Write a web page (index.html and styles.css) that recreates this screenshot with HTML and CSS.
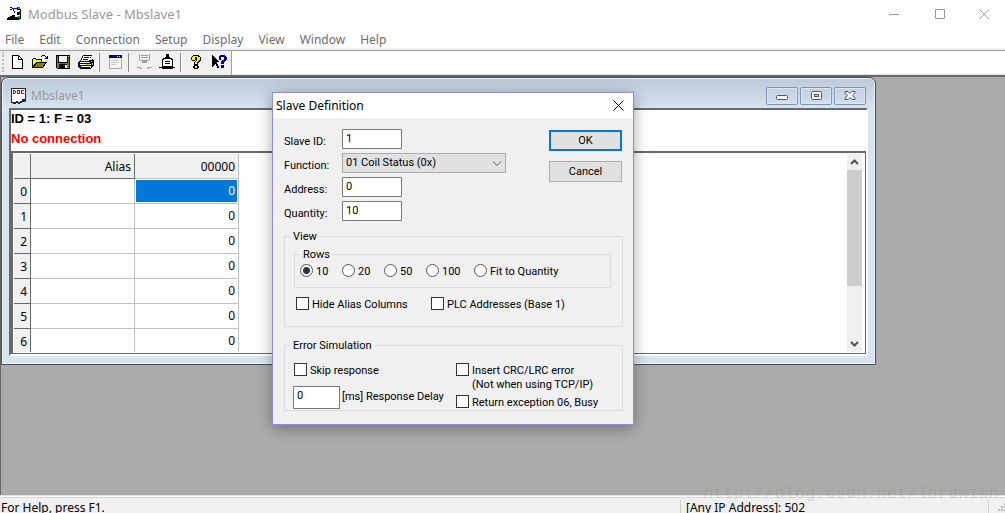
FILE: index.html
```html
<!DOCTYPE html>
<html lang="en">
<head>
<meta charset="utf-8">
<title>Modbus Slave - Mbslave1</title>
<link rel="stylesheet" href="styles.css">
</head>
<body>
<div class="app">
  <header class="titlebar">
    <svg class="app-icon" width="16" height="16" viewBox="0 0 16 16" shape-rendering="crispEdges">
      <path d="M3 1h2v1H3zM3 3h2v1H3zM6 3h1v2H6zM7 5h1v2H7zM10 1h3v3h-3zM10 6h3v3h-3zM10 11h3v3h-3zM1 11h2v-1h2V9h3v2h2v3H0v-2h1z" fill="#000"/>
      <path d="M5 2h6v1H5z" fill="#00f"/>
      <path d="M11 1h2v2h-2zM12 5h2v2h-2zM11 10h2v2h-2z" fill="#0a0"/>
      <path d="M13 3h1v10h-1zM8 12h4v1H8z" fill="#000"/>
      <path d="M12 8h1v1h-1zM12 13h1v1h-1z" fill="#0c0"/>
    </svg>
    <h1 class="app-title">Modbus Slave - Mbslave1</h1>
    <div class="caption">
      <button class="cap-btn" aria-label="Minimize"><svg width="11" height="11" viewBox="0 0 11 11"><path d="M0 5.500h10" stroke="#999" fill="none"/></svg></button>
      <button class="cap-btn" aria-label="Maximize"><svg width="11" height="11" viewBox="0 0 11 11"><path d="M.5.5h9v9h-9z" stroke="#999" fill="none"/></svg></button>
      <button class="cap-btn" aria-label="Close"><svg width="11" height="11" viewBox="0 0 11 11"><path d="M.5.5l9.500 9.500M10 .5L.5 10" stroke="#999" fill="none"/></svg></button>
    </div>
  </header>
  <nav class="menubar">
    <button>File</button><button>Edit</button><button>Connection</button><button>Setup</button><button>Display</button><button>View</button><button>Window</button><button>Help</button>
  </nav>
  <div class="toolbar">
    <div class="tools">
      <span class="grip"></span>
      <button aria-label="New"><svg width="16" height="16" viewBox="0 0 16 16" shape-rendering="crispEdges"><path d="M3 1h7v1h1v1h1v1h1v1h1v10H3z" fill="#000"/><path d="M4 2h5v4h4v8H4z" fill="#fff"/><path d="M10 3h1v1h1v1h-2z" fill="#fff"/></svg></button>
      <button aria-label="Open"><svg width="16" height="16" viewBox="0 0 16 16" shape-rendering="crispEdges"><path d="M1 4h3v1h6v3h5v1h-1v1h-1v2h-1v1h-1v1H0V5h1zM9 2h1V1h3v1h1v1h1V2h1v3h-3V4h1V3h-1V2h-3v1H9z" fill="#000"/><path d="M1 5h3v1h5v2H4v1H3v1H2v1H1z" fill="#ff0"/><path d="M2 5h1v1H2zM1 6h1v1H1zM3 6h1v1H3zM5 6h1v1H5zM7 6h1v1H7zM2 7h1v1H2zM4 7h1v1H4zM6 7h1v1H6zM1 8h1v1H1z" fill="#fff"/><path d="M5 9h8v1h-1v1h-1v2H2v-1h1v-1h1v-1h1z" fill="#808000"/></svg></button>
      <button aria-label="Save"><svg width="16" height="16" viewBox="0 0 16 16" shape-rendering="crispEdges"><path d="M1 1h14v14H2v-1H1z" fill="#000"/><path d="M2 2h1v7h10V4h1v10H2z" fill="#808000"/><path d="M4 2h8v6H4z" fill="#f0f0f0"/><path d="M13 2h1v1h-1z" fill="#fff"/><path d="M4 10h8v4H4z" fill="#000"/><path d="M10 11h2v3h-2z" fill="#fff"/></svg></button>
      <button aria-label="Print"><svg width="16" height="16" viewBox="0 0 16 16" shape-rendering="crispEdges"><path d="M5 1h9v1h-1v2h-1v2h2V5h1v1h1v6h-1v1h-1v1h-1v1H2v-1H1v-1H0V8h1V7h1V6h1V4h1V2h1z" fill="#000"/><path d="M5 2h8v1h-1v3h-1v1H3V6h1V4h1z" fill="#fff"/><path d="M6 3h5v1H6zM5 5h5v1H5z" fill="#000"/><path d="M2 8h10v1H2zM2 10h11v1H2zM3 12h10v1H3z" fill="#fff"/><path d="M13 7h1v1h-1zM14 9h1v2h-1zM12 13h1v1h-1z" fill="#ccc"/><path d="M8 10h3v1H8z" fill="#cc0"/></svg></button>
      <span class="sep"></span>
      <button aria-label="Slave definition"><svg width="16" height="16" viewBox="0 0 16 16" shape-rendering="crispEdges"><path d="M2 1h13v14H2z" fill="#aaa"/><path d="M3 4h11v10H3z" fill="#f4f4f4"/><path d="M2 1h13v3H2z" fill="#000080"/><path d="M10 2h1v1h-1zM12 2h1v1h-1z" fill="#fff"/><path d="M4 6h7v1H4zM4 8h7v1H4zM4 10h5v1H4z" fill="#ccc"/></svg></button>
      <span class="sep"></span>
      <button aria-label="Connect" disabled><svg width="16" height="16" viewBox="0 0 16 16" shape-rendering="crispEdges"><path d="M3 0h1v6H3zM13 0h1v6h-1zM5 1h7v1H5zM5 3h7v1H5zM4 6h9v1H4zM6 7h5v2H6zM1 13h4v1H1zM4 14h2v1H4zM11 14h2v1h-2zM12 13h4v1h-4z" fill="#a0a0a0"/></svg></button>
      <button aria-label="Disconnect"><svg width="16" height="16" viewBox="0 0 16 16" shape-rendering="crispEdges"><path d="M7 0h3v3h1v1h2v1h1v8h2v1h-2v1H3v-1H0v-1h3V5h1V4h2V3h1z" fill="#000"/><path d="M5 5h7v1h1v7H4V6h1z" fill="#fff"/><path d="M6 7h5v1H6zM6 9h5v1H6zM4 12h9v1H4z" fill="#000"/></svg></button>
      <span class="sep"></span>
      <button aria-label="Help"><svg width="16" height="16" viewBox="0 0 16 16" shape-rendering="crispEdges"><path d="M5 1h6v1h1v1h1v4h-1v1h-1v1h-1v2H6V8h1V7h1V6H7v1H4V6H3V3h1V2h1zM6 11h4v1h1v2h-1v1H6v-1H5v-2h1z" fill="#000"/><path d="M5 2h5v1h2v3h-1v1h-1v1H9v2H7V8h1V7h1V3H7v3H4V3h1zM7 12h2v2H7z" fill="#ff0"/></svg></button>
      <button aria-label="Context help"><svg width="16" height="16" viewBox="0 0 16 16" shape-rendering="crispEdges"><path d="M1 1h1v1h1v1h1v1h1v1h1v1h1v1h1v1H6v2h1v2h1v2H6v-2H5v-2H4v1H3v1H2v1H1z" fill="#000"/><path d="M9 1h5v1h1v1h1v3h-1v1h-1v1h-1v2h-3V7h1V6h2V3h-3v3H8V2h1zM10 11h3v3h-3z" fill="#000080"/></svg></button>
    </div>
  </div>

  <main class="workspace">
    <section class="child">
      <div class="child-title">
        <svg width="16" height="16" viewBox="0 0 16 16" shape-rendering="crispEdges"><path d="M0 0h15v13h-2v1h-2v1H9v1H7v-1H5v1H2v-1H0z" fill="#222"/><path d="M1 1h13v10h-3v2H9v1H7v-1H5v1H1z" fill="#fff"/><path d="M2 2h2v1h1v2H4v1H2zM6 2h3v4H6zM10 2h3v1h-2v2h2v1h-3z" fill="#e00000"/><path d="M3 3h1v2H3zM7 3h1v2H7z" fill="#fff"/><path d="M13 13h2v1h-2z" fill="#088"/></svg>
        <h2>Mbslave1</h2>
        <div class="child-btns">
          <button aria-label="Minimize document"><svg width="14" height="12" viewBox="0 0 14 12"><rect x="1.500" y="5.500" width="11" height="4" rx="1" fill="#f4f4f4" stroke="#4d5870"/></svg></button>
          <button aria-label="Restore document"><svg width="14" height="12" viewBox="0 0 14 12"><rect x="2.500" y="1.500" width="10" height="8" rx="1" fill="#f4f4f4" stroke="#4d5870"/><rect x="5.500" y="4.500" width="4" height="2" fill="#c5d3e3" stroke="#4d5870"/></svg></button>
          <button aria-label="Close document"><svg width="14" height="12" viewBox="0 0 14 12"><path d="M2 1.500h3l2 2 2-2h3v1.500L9.500 5.500 12 8v1.500H9l-2-2-2 2H2V8l2.500-2.500L2 3z" fill="#f4f4f4" stroke="#4d5870"/></svg></button>
        </div>
      </div>
      <div class="client">
        <div class="info">
          <p>ID = 1: F = 03</p>
          <p class="alert">No connection</p>
        </div>
        <div class="grid-pane">
          <div class="grid-view">
            <table class="grid">
              <thead><tr><th class="rowhead"></th><th>Alias</th><th>00000</th></tr></thead>
              <tbody>
                <tr><th>0</th><td></td><td class="selected">0</td></tr>
                <tr><th>1</th><td></td><td>0</td></tr>
                <tr><th>2</th><td></td><td>0</td></tr>
                <tr><th>3</th><td></td><td>0</td></tr>
                <tr><th>4</th><td></td><td>0</td></tr>
                <tr><th>5</th><td></td><td>0</td></tr>
                <tr><th>6</th><td></td><td>0</td></tr>
              </tbody>
            </table>
          </div>
          <div class="scroll">
            <svg width="15" height="16" viewBox="0 0 15 16"><path d="M4 10l3.500-3.500L11 10" stroke="#505050" stroke-width="2" fill="none"/></svg>
            <div class="track"><div class="thumb"></div></div>
            <svg width="15" height="16" viewBox="0 0 15 16"><path d="M4 6l3.500 3.500L11 6" stroke="#505050" stroke-width="2" fill="none"/></svg>
          </div>
        </div>
      </div>
    </section>
  </main>

  <footer class="status">
    <span class="status-main">For Help, press F1.</span>
    <span class="status-ip">[Any IP Address]: 502</span>
    <span class="status-end"><svg width="8" height="11" viewBox="0 0 8 11" shape-rendering="crispEdges"><path d="M6 0h2v2H6zM3 3h2v2H3zM6 3h2v2H6zM0 6h2v2H0zM3 6h2v2H3zM6 6h2v2H6z" fill="#bbb"/></svg></span>
  </footer>
  <div class="watermark">http://blog.csdn.net/lordwish</div>

  <form class="dialog" role="dialog" aria-labelledby="dlg-title">
    <div class="dialog-title">
      <h2 id="dlg-title">Slave Definition</h2>
      <button type="button" aria-label="Close dialog"><svg width="11" height="11" viewBox="0 0 11 11"><path d="M.5.5l10 10M10.500.5l-10 10" stroke="#000" fill="none"/></svg></button>
    </div>
    <div class="dialog-body">
      <div class="top">
        <div class="fields">
          <label for="sid">Slave ID:</label><input id="sid" type="text" value="1">
          <label for="fn">Function:</label>
          <div class="combo">
            <select id="fn"><option>01 Coil Status (0x)</option></select>
            <svg width="10" height="6" viewBox="0 0 10 6"><path d="M1 .5l4 4 4-4" stroke="#555" fill="none"/></svg>
          </div>
          <label for="addr">Address:</label><input id="addr" type="text" value="0">
          <label for="qty">Quantity:</label><input id="qty" type="text" value="10">
        </div>
        <div class="actions">
          <button type="button" class="btn default">OK</button>
          <button type="button" class="btn">Cancel</button>
        </div>
      </div>
      <fieldset class="group view">
        <legend>View</legend>
        <fieldset class="group rows">
          <legend>Rows</legend>
          <div class="radios">
            <label class="opt"><input type="radio" name="rows" checked><span>10</span></label>
            <label class="opt"><input type="radio" name="rows"><span>20</span></label>
            <label class="opt"><input type="radio" name="rows"><span>50</span></label>
            <label class="opt wide"><input type="radio" name="rows"><span>100</span></label>
            <label class="opt fit"><input type="radio" name="rows"><span>Fit to Quantity</span></label>
          </div>
        </fieldset>
        <div class="checks">
          <label class="opt"><input type="checkbox"><span>Hide Alias Columns</span></label>
          <label class="opt"><input type="checkbox"><span>PLC Addresses (Base 1)</span></label>
        </div>
      </fieldset>
      <fieldset class="group errors">
        <legend>Error Simulation</legend>
        <div class="error-cols">
          <div class="err-left">
            <label class="opt"><input type="checkbox"><span>Skip response</span></label>
            <div class="delay"><input id="delay" type="text" value="0"><label for="delay">[ms] Response Delay</label></div>
          </div>
          <div class="err-right">
            <label class="opt two"><input type="checkbox"><span>Insert CRC/LRC error<br>(Not when using TCP/IP)</span></label>
            <label class="opt"><input type="checkbox"><span>Return exception 06, Busy</span></label>
          </div>
        </div>
      </fieldset>
    </div>
  </form>
</div>
</body>
</html>
```
FILE: styles.css
```css
* { box-sizing: border-box; }
html, body { margin: 0; height: 100%; }
body { font: 12px/16px "Noto Sans", sans-serif; color: #000; overflow: hidden; }
button { border: 0; padding: 0; background: none; font: inherit; color: inherit; }
h1, h2, p { margin: 0; font: inherit; }
svg { display: block; flex: none; }

.app { position: relative; display: flex; flex-direction: column; height: 100vh; background: #fff; }

.titlebar { display: flex; align-items: center; height: 28px; padding-left: 7px; flex: none; }
.app-title { padding-left: 5px; color: #999; font-size: 13px; }
.caption { display: flex; margin-left: auto; }
.cap-btn { display: grid; place-items: center; width: 46px; height: 28px; }
.cap-btn:last-child { width: 42px; }

.menubar { display: flex; gap: 15px; height: 20px; padding: 4px 5px 0; color: #6d6d6d; flex: none; }

.toolbar { display: flex; height: 29px; border-top: 2px solid #f0f0f0; border-bottom: 2px solid #696969; box-shadow: inset 0 1px #a0a0a0, inset 0 -1px #e3e3e3; flex: none; }
.tools { display: flex; align-items: center; margin-top: 1px; padding: 0 1px 2px 0; background: #f0f0f0; border-right: 1px solid #a0a0a0; }
.tools button { display: grid; place-items: center; width: 23px; height: 22px; }
.grip { width: 4px; height: 20px; margin-right: 1px; border-right: 2px dotted #bbb; }
.sep { width: 6px; height: 19px; padding-left: 2px; }
.sep::before { content: ""; display: block; width: 1px; height: 100%; background: #8c8c8c; }

.workspace { position: relative; flex: 1; background: #ababab; border-left: 1px solid #696969; overflow: hidden; }

.child { position: absolute; left: 0; top: 0; width: 875px; height: 288px; display: flex; flex-direction: column; padding: 0 7px 8px; background: #d7e4f2; border: 1px solid #484c50; border-radius: 7px 7px 0 0; box-shadow: inset 0 0 0 1px #eef5fb; background-image: linear-gradient(#bccad8, #d7e4f2 32px); }
.child-title { display: flex; align-items: center; height: 30px; padding: 6px 2px 0 2px; flex: none; }
.child-title h2 { padding-left: 4px; color: #999; }
.child-btns { display: flex; gap: 2px; margin-left: auto; }
.child-btns button { display: grid; place-items: center; width: 32px; height: 18px; border: 1px solid #8494af; border-radius: 2px; box-shadow: inset 0 0 0 1px #dbe7f3; background: linear-gradient(#c3d1e0, #d0deec); }
.client { display: flex; flex-direction: column; flex: 1; min-height: 0; border: 2px solid; border-color: #696969 #fff #fff #696969; background: #fff; }
.info { height: 41px; font: bold 13px/18px "Liberation Sans", Arial, sans-serif; }
.info p { height: 20px; }
.info .alert { color: #f00; }
.grid-pane { display: flex; flex: 1; min-height: 0; padding: 1px 3px 1px 1px; border: 2px solid #696969; border-right-width: 1px; border-bottom-width: 1px; }
.grid-view { flex: 1; min-height: 0; overflow: hidden; }
.grid { border-collapse: separate; border-spacing: 0; table-layout: fixed; width: 225px; }
.grid th, .grid td { height: 25px; padding: 0 3px 0 0; text-align: right; font-weight: 400; border: 0 solid #c0c0c0; border-width: 0 1px 1px 0; }
.grid th { padding-top: 2px; background: #f0f0f0; border-color: #696969; }
.grid .rowhead { width: 17px; }
.grid thead th:last-child { border-color: #c0c0c0; }
.grid .selected { background: #0078d7; color: #fff; box-shadow: inset 0 0 0 1px #fff; }

.scroll { display: flex; flex-direction: column; width: 15px; background: #f0f0f0; }
.track { flex: 1; }
.thumb { height: 70%; background: #cdcdcd; }

.status { display: flex; height: 18px; padding: 5px 0 0 1px; background: #f0f0f0; box-shadow: inset 0 1px #e0e0e0, inset 0 2px #fff, inset 0 3px #d8d8d8; flex: none; white-space: nowrap; }
.status-main { flex: 1; }
.status-ip { width: 308px; padding-left: 5px; border-left: 1px solid #d0d0d0; }
.status-end { width: 17px; padding: 3px 0 0 9px; border-left: 1px solid #d0d0d0; }
.watermark { position: absolute; right: 6px; bottom: 9px; font: 17px/20px "Liberation Mono", monospace; color: rgba(140, 140, 110, .25); }

.dialog { position: absolute; left: 272px; top: 92px; width: 362px; background: #f0f0f0; border: 1px solid #8f8cd6; box-shadow: 0 3px 14px rgba(0, 0, 0, .35); font: 11px/14px Roboto, "Liberation Sans", sans-serif; }
.dialog input, .dialog select { font: inherit; color: #000; margin: 0; }
.dialog-title { display: flex; align-items: center; justify-content: space-between; height: 25px; padding: 0 9px 0 3px; background: #fff; font: 12px/16px "Noto Sans", sans-serif; }
.dialog-body { padding: 11px 10px 13px 11px; }
.top { display: flex; justify-content: space-between; padding-right: 1px; }
.fields { display: grid; grid-template-columns: 58px 164px; grid-auto-rows: 20px; row-gap: 4px; }
.fields label { padding-top: 6px; }
.dialog input[type="text"] { width: 60px; height: 20px; padding: 0 3px 2px; border: 1px solid #7a7a7a; background: #fff; }
.combo { position: relative; }
.combo select { appearance: none; display: block; width: 100%; height: 20px; padding: 0 3px; background: #e1e1e1; border: 1px solid #adadad; border-radius: 0; }
.combo svg { position: absolute; right: 4px; top: 8px; pointer-events: none; }
.actions { display: flex; flex-direction: column; gap: 10px; padding-top: 1px; }
.btn { width: 73px; height: 21px; background: #e1e1e1; border: 1px solid #adadad; }
.btn.default { border: 2px solid #0078d7; }

.group { min-width: 0; margin: 0; padding: 0; border: 1px solid #dcdcdc; }
.group legend { height: 14px; padding: 1px 3px 0; }
.view { height: 98px; margin-top: 8px; padding: 0 11px 0 9px; }
.view > legend { margin-left: -4px; }
.rows { height: 41px; margin-top: 4px; }
.rows legend { margin-left: 5px; }
.radios { display: flex; padding: 3px 0 0 5px; }
.radios .opt { width: 42px; }
.radios .wide { width: 48px; }
.radios .fit { width: auto; }
.opt { display: flex; align-items: flex-start; gap: 3px; white-space: nowrap; }
.opt span { padding-top: 1px; }
.opt input { appearance: none; width: 13px; height: 13px; border: 1px solid #333; background: #fff; flex: none; }
.opt input[type="radio"] { border-color: #555; border-radius: 50%; }
.opt input[type="radio"]:checked { background: radial-gradient(circle, #333 3px, #fff 4px); }
.checks { display: grid; grid-template-columns: 135px 1fr; padding: 9px 0 0 2px; }
.errors { height: 73px; margin-top: 11px; padding: 0 8px; }
.errors > legend { margin-left: -3px; }
.error-cols { display: grid; grid-template-columns: 163px 1fr; padding-top: 11px; }
.err-left .opt { padding-left: 1px; }
.delay { display: flex; gap: 2px; margin-top: 8px; }
.delay label { padding-top: 4px; }
.delay input[type="text"] { width: 47px; height: 23px; padding-bottom: 4px; }
.err-right { display: flex; flex-direction: column; gap: 3px; }
```
